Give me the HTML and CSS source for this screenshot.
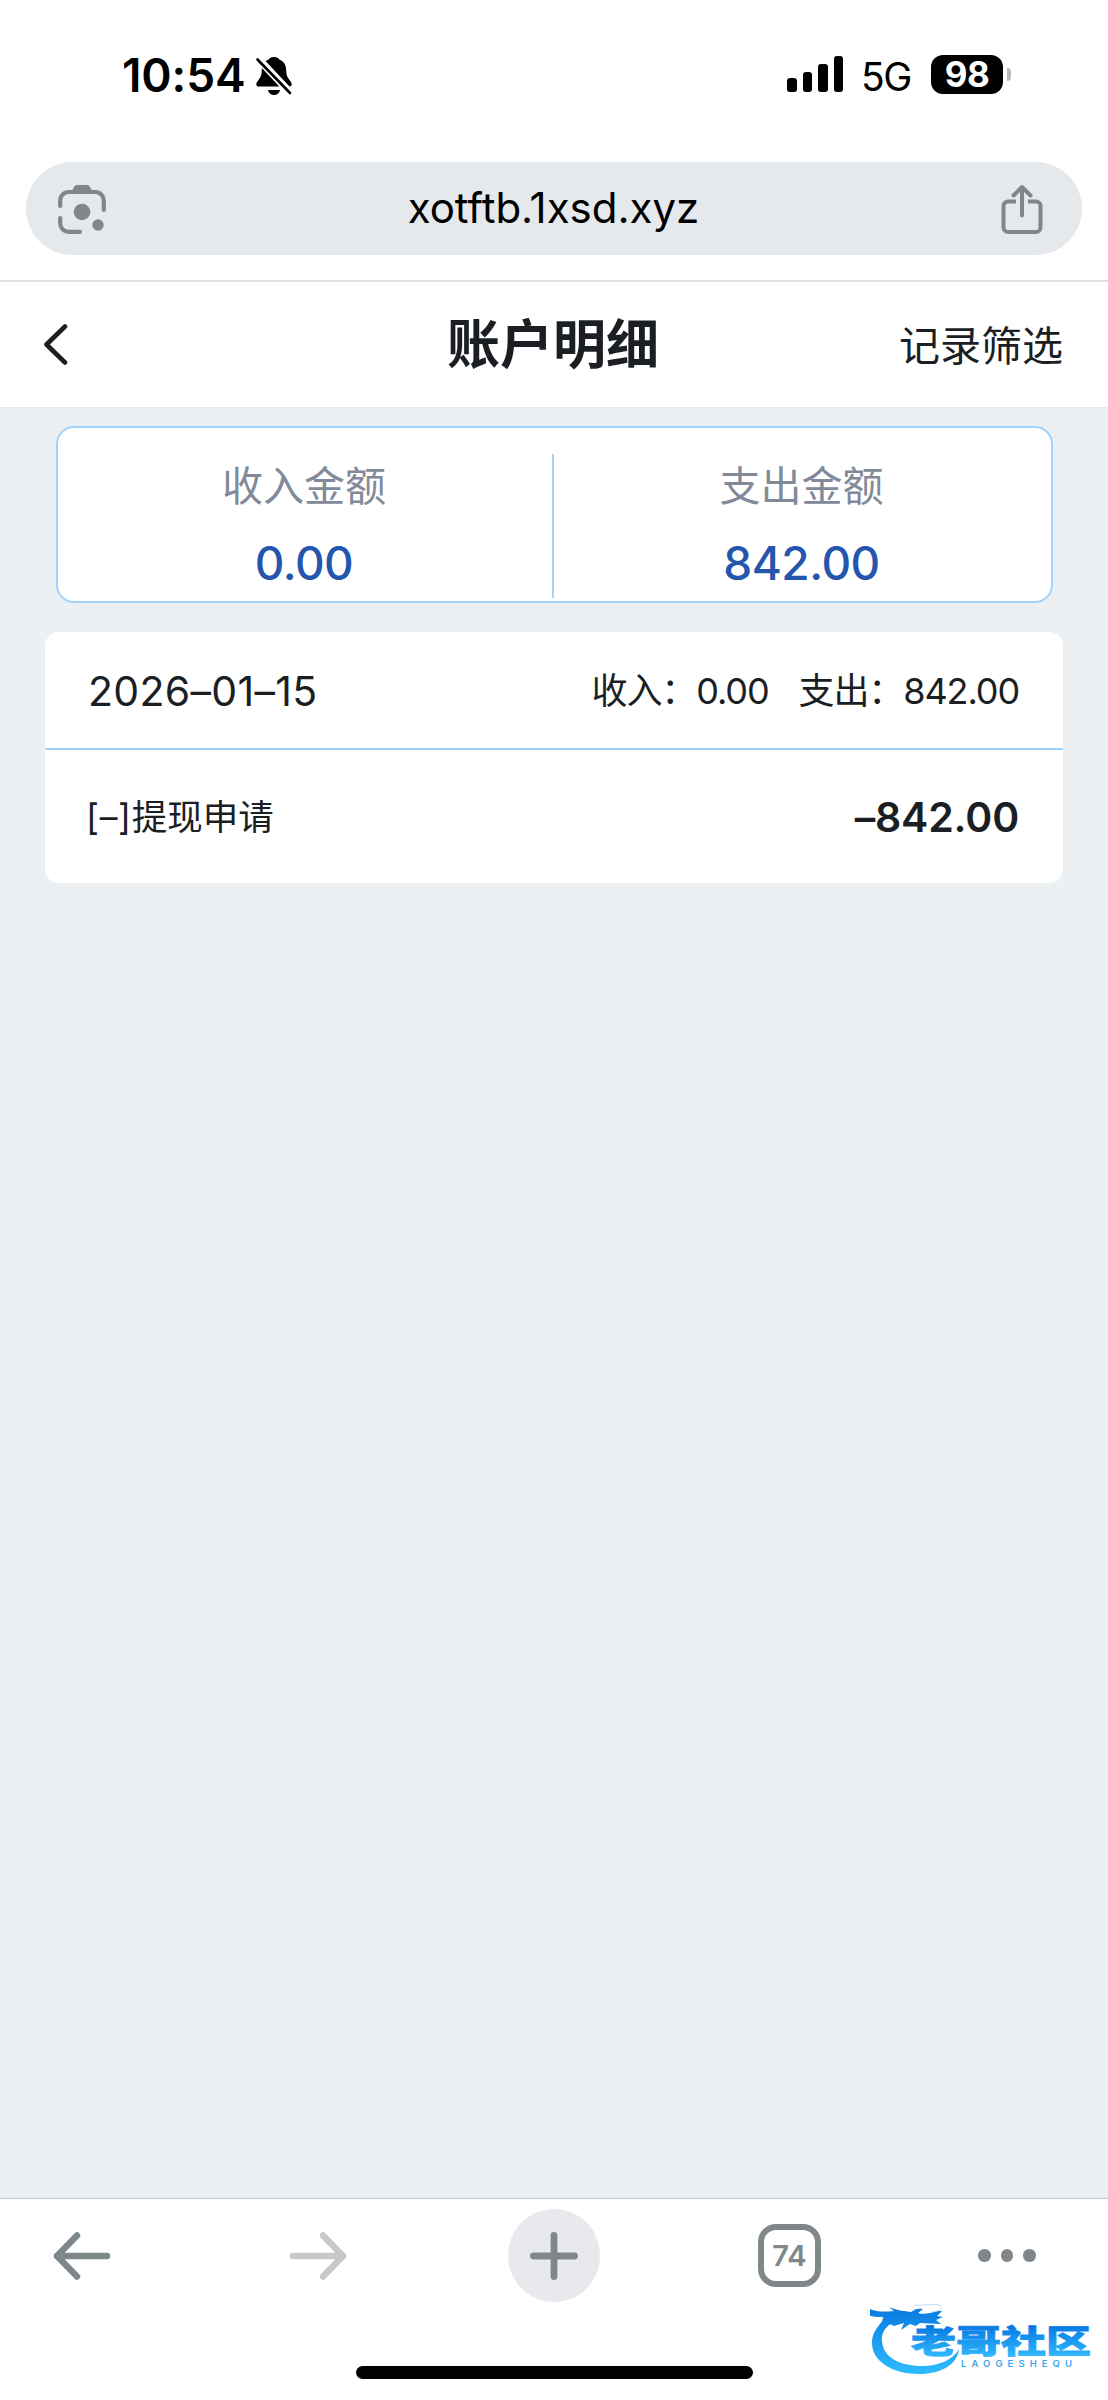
FILE: index.html
```html
<!DOCTYPE html>
<html lang="zh-CN">
<head>
  <meta charset="UTF-8" />
  <meta name="viewport" content="width=device-width, initial-scale=1.0"/>
  <title>账户明细</title>
  <link rel="stylesheet" href="styles.css">
</head>
<body>

  <!-- Status bar -->
  <div class="status-bar">
    <span class="time">10:54</span>
    <svg class="bell" width="38" height="40" viewBox="0 0 38 40">
      <path d="M19 1c-3 0-4.500 1-5.300 2.600C9 5.500 7 9 6.800 14c-.2 5.500-1 7-4 11-1.500 2-1.800 3.200-1.300 4.300.4 1 1.300 1.300 2.500 1.300h30c1.200 0 2.100-.4 2.500-1.300.5-1.100.2-2.300-1.300-4.300-3-4-3.800-5.500-4-11-.2-5-2.200-8.500-6.900-10.400C23.500 2 22 1 19 1z"/>
      <path d="M13 34h12c-.6 3.200-3 5-6 5s-5.400-1.800-6-5z"/>
      <path d="M3.500 3 35.500 37" stroke="#fff" stroke-width="7.500"/>
      <path d="M2.500 3.500 35 37" stroke="#000" stroke-width="2.600" stroke-linecap="round"/>
    </svg>
    <div class="signal"><i class="s1"></i><i class="s2"></i><i class="s3"></i><i class="s4"></i></div>
    <span class="network">5G</span>
    <div class="battery">98</div>
    <div class="battery-tip"></div>
  </div>

  <!-- Address bar -->
  <div class="address">
    <svg width="48" height="50" viewBox="0 0 48 50" fill="none" stroke="#80878a" stroke-width="4.200" stroke-linecap="round">
      <path d="M2.200 22v-5.500a8.500 8.500 0 0 1 8.500-8.500h26.600a8.500 8.500 0 0 1 8.500 8.500V26M2.200 34v5.500a8.500 8.500 0 0 0 8.500 8.300H22"/>
      <path d="M13.500 8l2.500-5q1-2 3-2h10q2 0 3 2l2.500 5z" fill="#80878a" stroke="none"/>
      <circle cx="24" cy="28" r="8.300" fill="#80878a" stroke="none"/>
      <circle cx="40" cy="41" r="5.700" fill="#80878a" stroke="none"/>
    </svg>
    <span class="url">xotftb.1xsd.xyz</span>
    <svg width="42" height="50" viewBox="0 0 42 50" fill="none" stroke="#80878c" stroke-width="4">
      <path d="M15 17.500H7a4.500 4.500 0 0 0-4.500 4.500v21.500A4.500 4.500 0 0 0 7 48h28a4.500 4.500 0 0 0 4.500-4.500V22a4.500 4.500 0 0 0-4.500-4.500h-8"/>
      <path d="M21 31.500V4M12.500 11.500 21 3l8.500 8.500" stroke-linecap="round" stroke-linejoin="round"/>
    </svg>
  </div>

  <!-- Page header -->
  <div class="header">
    <svg class="back" width="26" height="44" viewBox="0 0 26 44" fill="none" stroke="#1b1e23" stroke-width="4.600" stroke-linecap="round" stroke-linejoin="round">
      <path d="M23 3.500 4.500 21.500l18.500 18"/>
    </svg>
    <h1>账户明细</h1>
    <span class="filter">记录筛选</span>
  </div>

  <!-- Records -->
  <div class="content">
    <div class="summary">
      <div class="summary-item">
        <p class="label">收入金额</p>
        <p class="amount">0.00</p>
      </div>
      <div class="divider"></div>
      <div class="summary-item">
        <p class="label">支出金额</p>
        <p class="amount">842.00</p>
      </div>
    </div>

    <div class="record">
      <div class="record-head">
        <span class="date">2026–01–15</span>
        <div class="totals"><span>收入：0.00</span><span>支出：842.00</span></div>
      </div>
      <div class="record-row">
        <span class="name"><span class="sign">[–]</span>提现申请</span>
        <span class="money">–842.00</span>
      </div>
    </div>
  </div>

  <!-- Browser toolbar -->
  <div class="toolbar">
    <svg class="tool-back" width="58" height="50" viewBox="0 0 58 50" fill="none" stroke="#80878a" stroke-width="6.500" stroke-linecap="round" stroke-linejoin="round">
      <path d="M54 25H4M24 4.500 4 25l20 20.500"/>
    </svg>
    <svg class="tool-forward" width="58" height="50" viewBox="0 0 58 50" fill="none" stroke="#c8c8c8" stroke-width="6.500" stroke-linecap="round" stroke-linejoin="round">
      <path d="M4 25h50M34 4.500 54 25 34 45.500"/>
    </svg>
    <div class="tool-new">
      <svg width="48" height="48" viewBox="0 0 48 48" stroke="#80878c" stroke-width="6.800" stroke-linecap="round">
        <path d="M24 3.500v41M3.500 24h41"/>
      </svg>
    </div>
    <div class="tool-tabs">74</div>
    <div class="tool-more"><i></i><i></i><i></i></div>
  </div>
  <div class="home-bar"></div>

  <!-- Watermark logo -->
  <svg class="logo" width="230" height="84" viewBox="0 0 230 84">
    <defs>
      <linearGradient id="blue" gradientUnits="userSpaceOnUse" x1="0" y1="10" x2="0" y2="74">
        <stop offset="0" stop-color="#0878e0"/>
        <stop offset="1" stop-color="#2cb8ff"/>
      </linearGradient>
      <linearGradient id="word" gradientUnits="userSpaceOnUse" x1="0" y1="31" x2="0" y2="60">
        <stop offset="0" stop-color="#087be2"/>
        <stop offset="1" stop-color="#30b8ff"/>
      </linearGradient>
    </defs>
    <g fill="url(#blue)">
      <path d="M28 18C12 23 2 34 2 47c0 18 20 31 47 31 22 0 38-9 40-25-6 11-21 17-37 17-23 0-39-9-40-25C11 34 19 25 36 23z"/>
      <path d="M0 13c7 3 14 3 24 2l-5-4c9 4 16 4 22 5 4-3 6-4 12-3l-5 4c6 2 12 0 20-2l4 0-5 5 6 1-7 3 5 4c-8 0-15-1-21-1l-4 3-6-2-9 6 3-7-10 3-4-2-11 1c3-3 4-5 4-8-7 0-17 0-23-8z"/>
    </g>
    <path d="M44 9c12 1 26-3 28 3-1 3-6 3-10 4" fill="none" stroke="#b9dcf7" stroke-width="1"/>
    <text class="logo-name" x="41" y="57" textLength="180" lengthAdjust="spacingAndGlyphs" fill="url(#word)" stroke="url(#word)" stroke-width="0.800">老哥社区</text>
    <text class="logo-latin" x="91" y="71" textLength="111" lengthAdjust="spacing">LAOGESHEQU</text>
  </svg>

</body>
</html>
```

FILE: styles.css
```css
* { box-sizing: border-box; }
body { margin: 0; width: 1108px; height: 2400px; position: relative; display: flex; flex-direction: column; background: #fff; color: #1b1e23; font-family: Inter, "Noto Sans CJK SC", sans-serif; overflow: hidden; }
h1, p { margin: 0; }
svg { display: block; flex: none; }
i { display: block; }

.status-bar { height: 162px; flex: none; display: flex; align-items: flex-start; padding: 55px 97px 0 122px; color: #000; }
.time { width: 133px; font-size: 46px; line-height: 41px; font-weight: 600; letter-spacing: -0.100px; }
.bell { margin-top: 1px; }
.signal { display: flex; align-items: flex-end; gap: 6px; height: 37px; margin-left: auto; }
.signal i { width: 9.500px; border-radius: 3px; background: #000; }
.signal .s1 { height: 14px; }
.signal .s2 { height: 20px; }
.signal .s3 { height: 28px; }
.signal .s4 { height: 36px; }
.network { width: 69px; padding-left: 18px; font-size: 39px; line-height: 43px; letter-spacing: -1.500px; }
.battery { width: 72px; height: 39px; margin-left: 19px; border-radius: 12px; background: #000; color: #fff; font-size: 35px; line-height: 39px; font-weight: 700; text-align: center; letter-spacing: -0.500px; }
.battery-tip { width: 4px; height: 13px; margin: 13px 0 0 4px; border-radius: 0 5px 5px 0; background: #b8b8b8; }

.address { height: 93px; flex: none; margin: 0 26px 25px; padding: 0 39px 0 32px; border-radius: 47px; background: #e6e9ec; display: flex; align-items: center; justify-content: space-between; }
.url { padding-bottom: 2px; color: #000; font-size: 42px; line-height: 50px; }

.header { height: 129px; flex: none; border-top: 2px solid #e0e1e2; border-bottom: 2px solid #e7eaf1; padding: 0 45px 0 42px; display: grid; grid-template-columns: 1fr auto 1fr; align-items: center; }
h1 { padding: 1px 0 0 1px; font-size: 53px; line-height: 70px; font-weight: 700; }
.filter { justify-self: end; padding-top: 3px; font-size: 41px; line-height: 60px; }

.content { height: 1789px; flex: none; background: #ecf0f3; padding: 17px 45px 0; }
.summary { height: 177px; margin: 0 10px 29px 11px; border: 2px solid #a0d4ff; border-radius: 18px; background: #fff; display: grid; grid-template-columns: 494px 2px 1fr; }
.summary-item { padding: 28px 2px 0 0; text-align: center; }
.label { font-size: 41px; line-height: 60px; color: #828a9a; }
.amount { margin-top: 17px; font-size: 46px; line-height: 60px; font-weight: 500; color: #2456ae; letter-spacing: -0.500px; }
.divider { height: 144px; margin-top: 26px; background: #a0d4ff; }
.record { height: 251px; border-radius: 14px; background: #fff; }
.record-head { height: 118px; padding: 0 44px 0 43px; border-bottom: 2px solid #a0d4ff; display: flex; align-items: center; justify-content: space-between; }
.date { padding-top: 2px; font-size: 41px; letter-spacing: 0.300px; }
.totals { display: flex; gap: 30px; padding-bottom: 4px; font-size: 36px; letter-spacing: -1.100px; }
.record-row { height: 133px; padding: 0 44px 0 41px; display: flex; align-items: center; justify-content: space-between; }
.name { padding-bottom: 4px; font-size: 35.500px; }
.sign { letter-spacing: 0.700px; }
.money { font-size: 41px; font-weight: 600; letter-spacing: -0.200px; }

.toolbar { height: 114px; flex: none; border-top: 1px solid #c5c9cc; padding-left: 53px; display: flex; align-items: center; }
.tool-forward { margin-left: 178px; }
.tool-new { width: 92px; height: 93px; margin-left: 161px; border-radius: 50%; background: #e7e9ed; display: flex; align-items: center; justify-content: center; }
.tool-tabs { width: 63px; height: 63px; margin-left: 158px; border: 6px solid #80878a; border-radius: 18px; color: #80878a; font-size: 29px; line-height: 51px; font-weight: 600; text-align: center; }
.tool-more { margin-left: 157px; display: flex; gap: 10px; }
.tool-more i { width: 12.500px; height: 12.500px; border-radius: 50%; background: #80878a; }
.home-bar { width: 397px; height: 13px; flex: none; margin: 54px auto 0; border-radius: 7px; background: #000; }

.logo { position: absolute; left: 870px; top: 2296px; }
.logo-name { font-family: "Noto Sans CJK SC", sans-serif; font-size: 32px; font-weight: 900; }
.logo-latin { font-size: 9.500px; font-weight: 600; fill: #3aa8f0; }
```
